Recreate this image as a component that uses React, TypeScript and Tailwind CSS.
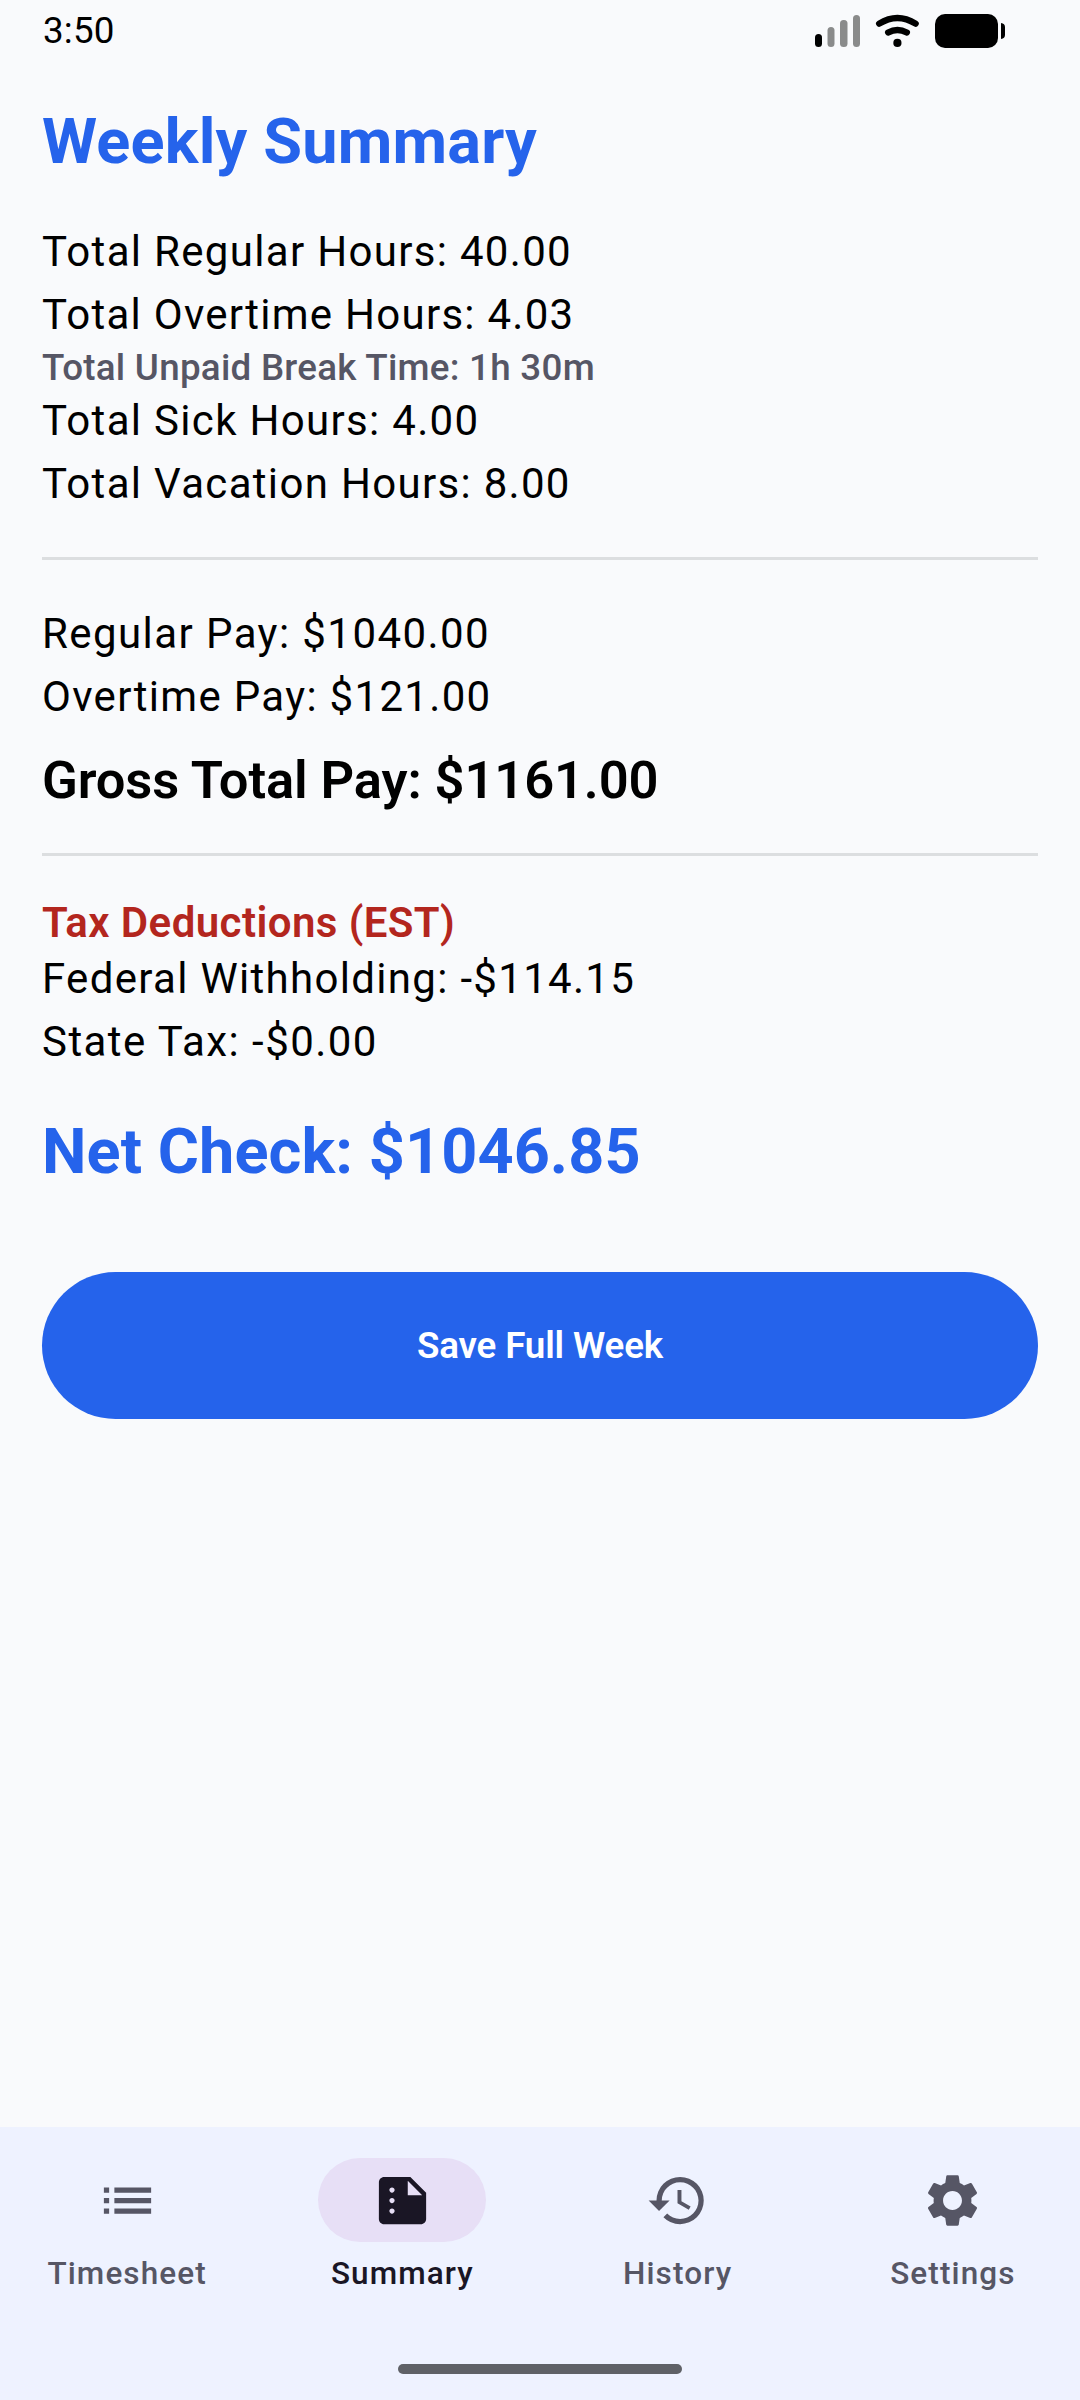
import { IconType } from 'react-icons';
import { MdHistory, MdList, MdSettings, MdSummarize } from 'react-icons/md';

interface NavItem {
  label: string;
  icon: IconType;
  active?: boolean;
}

const navItems: NavItem[] = [
  { label: 'Timesheet', icon: MdList },
  { label: 'Summary', icon: MdSummarize, active: true },
  { label: 'History', icon: MdHistory },
  { label: 'Settings', icon: MdSettings },
];

const StatusBar = () => (
  <header className="flex h-[63px] items-start justify-between pl-[43px] pr-[75px]">
    <span className="mt-[9px] text-[36.75px] leading-[43px] tracking-[0.2px]">3:50</span>
    <svg width="190" height="34" viewBox="0 0 190 34" className="mt-[14px]">
      <rect x="0" y="20" width="7" height="13" rx="3.5" />
      <g fill="#8a8b8b">
        <rect x="12.5" y="13" width="7" height="20" rx="3.5" />
        <rect x="25" y="6" width="7.5" height="27" rx="3.5" />
        <rect x="38" y="1" width="7" height="32" rx="3.5" />
      </g>
      <g fill="none" stroke="#000" strokeWidth="6.4" strokeLinecap="round">
        <path d="M64.2 9.600Q82.400-1.800 100.600 9.600" />
        <path d="M73.200 18.500Q82.400 13.300 91.800 18.500" />
      </g>
      <circle cx="82.4" cy="28.900" r="4.100" />
      <rect x="120" y="0" width="63" height="34" rx="10" />
      <path d="M186 9q4 .5 4 4v8q0 3.5-4 4z" />
    </svg>
  </header>
);

const Line = ({ text, tracking = 'tracking-[1.3125px]' }: { text: string; tracking?: string }) => (
  <p className={`h-[63px] text-[42px] leading-[63px] ${tracking}`}>{text}</p>
);

const Divider = () => <div className="my-[42px] h-[3px] bg-[#dcdee0]" />;

const BottomNav = () => (
  <nav className="flex h-[273px] flex-col justify-between bg-[#eef2ff] pt-[31px]">
    <div className="grid grid-cols-4 gap-[21px]">
      {navItems.map(({ label, icon: Icon, active }) => (
        <div
          key={label}
          className={`flex flex-col items-center ${active ? 'text-[#1a1625]' : 'text-[#565665]'}`}
        >
          <div
            className={`flex h-[84px] w-[168px] items-center justify-center rounded-full ${
              active ? 'bg-[#e7dff6]' : ''
            }`}
          >
            <Icon size={63} />
          </div>
          <span className="mt-[11px] text-[31.5px] font-medium leading-[42px] tracking-[1.1px]">
            {label}
          </span>
        </div>
      ))}
    </div>
    <div className="mb-[26px] h-[10px] w-[284px] self-center rounded-full bg-[#5f6167]" />
  </nav>
);

const App = () => {
  return (
    <div className="flex h-[2400px] w-[1080px] flex-col overflow-hidden bg-[#f9fafc] font-['Roboto',sans-serif] text-black">
      <StatusBar />
      <main className="flex flex-1 flex-col px-[42px] pt-[42px]">
        <h1 className="h-[74px] text-[63px] font-bold leading-[74px] tracking-[0.2px] text-[#2563eb]">
          Weekly Summary
        </h1>
        <section className="mt-[41px]">
          <Line text="Total Regular Hours: 40.00" />
          <Line text="Total Overtime Hours: 4.03" tracking="tracking-[1.26px]" />
          <p className="h-[43px] text-[36.75px] font-medium leading-[43px] tracking-[0.2625px] text-[#565665]">
            Total Unpaid Break Time: 1h 30m
          </p>
          <Line text="Total Sick Hours: 4.00" />
          <Line text="Total Vacation Hours: 8.00" />
        </section>
        <Divider />
        <section>
          <Line text="Regular Pay: $1040.00" tracking="tracking-[1.42px]" />
          <Line text="Overtime Pay: $121.00" />
          <p className="mt-[21px] h-[62px] text-[52.5px] font-semibold leading-[62px] tracking-[-0.12px]">
            Gross Total Pay: $1161.00
          </p>
        </section>
        <Divider />
        <section>
          <h2 className="h-[49px] text-[42px] font-semibold leading-[49px] tracking-[0.42px] text-[#b3261e]">
            Tax Deductions (EST)
          </h2>
          <Line text="Federal Withholding: -$114.15" />
          <Line text="State Tax: -$0.00" tracking="tracking-[1.45px]" />
          <p className="mt-[42px] h-[74px] text-[63px] font-bold leading-[74px] tracking-[0.08px] text-[#2563eb]">
            Net Check: $1046.85
          </p>
        </section>
        <button className="mt-[83px] h-[147px] rounded-full bg-[#2563eb] text-[36.75px] font-semibold tracking-[-0.15px] text-white">
          Save Full Week
        </button>
      </main>
      <BottomNav />
    </div>
  );
};

export default App;
